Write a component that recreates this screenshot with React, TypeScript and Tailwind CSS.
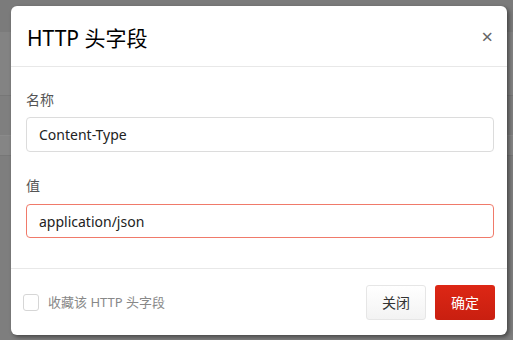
import { useState } from 'react';

function App() {
  const [name, setName] = useState('Content-Type');
  const [value, setValue] = useState('application/json');
  const [saved, setSaved] = useState(false);

  return (
    <div
      className="relative w-[513px] h-[340px] overflow-hidden bg-[#7d7d7d]"
      style={{ fontFamily: '"Noto Sans", "Noto Sans CJK SC", sans-serif' }}
    >
      {/* page behind the overlay */}
      <div className="absolute inset-0 flex flex-col">
        <div className="h-[32px] bg-[#7b7b7b]" />
        <div className="h-[64px] bg-[#838383] border-b border-[#777]" />
        <div className="h-[40px] bg-[#7f7f7f] border-b border-[#8a8a8a]" />
        <div className="h-[20px] bg-[#858585] border-b border-[#777]" />
        <div className="flex-1 bg-[#7e7e7e]" />
      </div>

      {/* dialog */}
      <div className="absolute left-[11px] top-[6px] w-[496px] h-[329px] bg-white rounded-[6px] shadow-[2px_2px_4px_rgba(0,0,0,0.45)] flex flex-col">
        <div className="h-[61px] flex items-center justify-between pl-[16px] pr-[14px] border-b border-[#e8e8e8]">
          <h1 className="text-[21px] text-black leading-none pt-[4px]">HTTP 头字段</h1>
          <button className="text-[#666] text-[20px] leading-none pt-[2px]">×</button>
        </div>

        <div className="flex-1 px-[15px] pt-[23px]">
          <label className="block text-[14px] text-[#555] leading-[20px]">名称</label>
          <input
            value={name}
            onChange={e => setName(e.target.value)}
            className="mt-[7px] w-[468px] h-[35px] border border-[#dcdcdc] rounded-[4px] px-[12px] text-[14px] text-[#222] outline-none"
          />
          <label className="block mt-[24px] text-[14px] text-[#555] leading-[20px]">值</label>
          <input
            value={value}
            onChange={e => setValue(e.target.value)}
            className="mt-[8px] w-[468px] h-[34px] border border-[#f07a6a] rounded-[4px] px-[12px] text-[14px] text-[#222] outline-none"
          />
        </div>

        <div className="h-[67px] border-t border-[#e8e8e8] flex items-center justify-between pl-[12px] pr-[12px]">
          <label className="flex items-center gap-[9px] text-[13px] text-[#888] cursor-pointer pt-[1px]">
            <input
              type="checkbox"
              checked={saved}
              onChange={e => setSaved(e.target.checked)}
              className="appearance-none w-[16px] h-[17px] border border-[#d6d6d6] rounded-[3px] bg-white"
            />
            收藏该 HTTP 头字段
          </label>
          <div className="flex gap-[9px] pt-[1px]">
            <button className="w-[60px] h-[35px] rounded-[3px] border border-[#e6e6e6] bg-gradient-to-b from-white to-[#f3f3f3] text-[14px] text-[#333]">
              关闭
            </button>
            <button className="w-[60px] h-[35px] rounded-[3px] bg-gradient-to-b from-[#dd2715] to-[#c91f10] text-[14px] text-white">
              确定
            </button>
          </div>
        </div>
      </div>
    </div>
  );
}

export default App;
